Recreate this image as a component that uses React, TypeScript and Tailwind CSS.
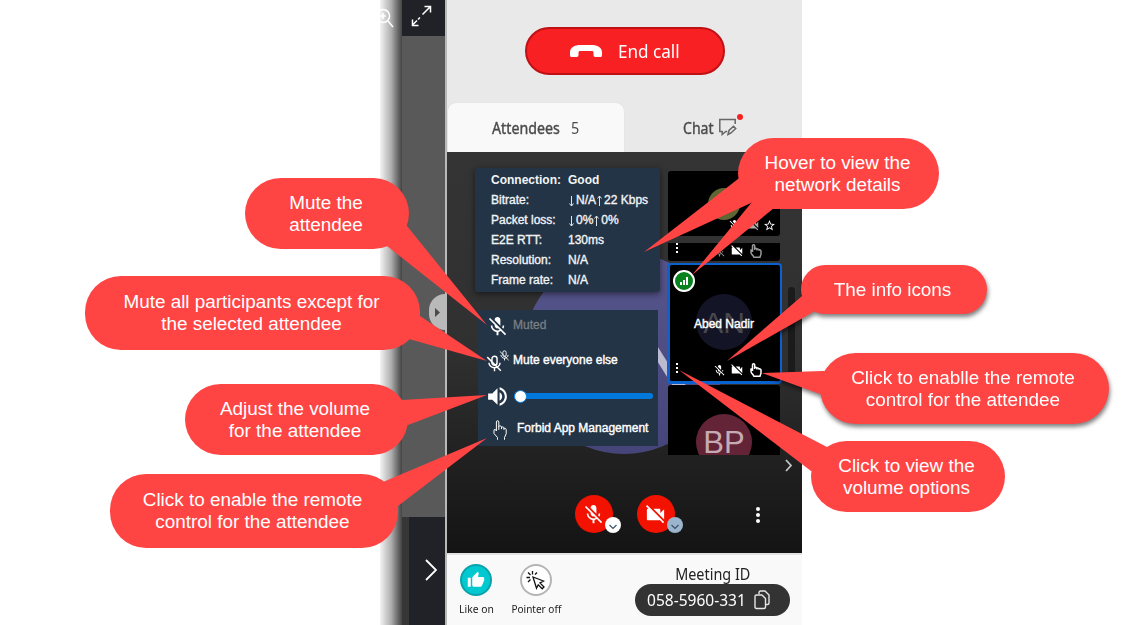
import React from "react";
import { MdMicOff, MdVideocamOff, MdVolumeUp, MdStarBorder, MdThumbUp } from "react-icons/md";

const ui = "font-['Liberation_Sans',Arial,sans-serif]";
const human = "font-['Noto_Sans',sans-serif]";

function Hand({ className }: { className: string }) {
  return (
    <svg viewBox="0 0 14 20" className={className} fill="none" stroke="currentColor" strokeWidth="1" strokeLinejoin="round" strokeLinecap="round">
      <path d="M4.500 19.300v-1.800L1 13.500V9.800c1-.8 2 0 2.400 1.200V2c0-1.700 2.400-1.700 2.400 0v7.500M5.800 6.200c1.200-.8 2.600-.3 2.700 1v1.500M8.500 7.200c1-.7 2.300-.2 2.500.8v1.500M11 8.400c1-.5 2.200 0 2.200 1.200v4.200L11.500 17.500v1.800" />
    </svg>
  );
}

function Cursor({ className }: { className: string }) {
  return (
    <svg viewBox="0 0 12 14" className={className} fill="none" stroke="currentColor" strokeWidth="1.500" strokeLinejoin="round">
      <path d="M2.500 8V1.800c0-1.400 2.200-1.400 2.200 0V6M4.700 4.600c1-.5 2.200-.2 2.200.8v1M6.900 5.200c1-.4 2.100-.1 2.100.9v.7M9 5.900c1.200-.3 2 .3 2 1.200V10c0 1-.9 1.600-.9 3.200H3.800C3.800 11.600 1 10.500 1 8.500V6c.6-.3 1.200 0 1.500.6" />
    </svg>
  );
}

function OutlineMicOff({ className }: { className: string }) {
  return (
    <svg viewBox="0 0 20 20" className={className} fill="none" stroke="currentColor" strokeWidth="1.700">
      <rect x="7" y="1.500" width="6" height="10.500" rx="3" />
      <path d="M3.500 9c0 3.500 3 6 6.500 6s6.500-2.500 6.500-6M10 15v4M1.500 2.500l16 16" />
    </svg>
  );
}

function Dots({ className }: { className: string }) {
  return (
    <svg viewBox="0 0 4 12" className={className} fill="#fff">
      <rect x="1" y="1" width="2" height="2" />
      <rect x="1" y="5" width="2" height="2" />
      <rect x="1" y="9" width="2" height="2" />
    </svg>
  );
}

function TileIcons({ active }: { active?: boolean }) {
  return (
    <div className="flex h-4 items-center text-white">
      <MdMicOff className={active ? "h-[13px] w-[13px]" : "h-[13px] w-[13px] text-[#8c8c8c]"} />
      <MdVideocamOff className="ml-[4px] h-[14px] w-[14px]" />
      <Cursor className={active ? "ml-[6px] h-[14px] w-3" : "ml-[6px] h-[14px] w-3 text-[#999]"} />
    </div>
  );
}

const stats = [
  ["Bitrate:", "N/A", "22 Kbps"],
  ["Packet loss:", "0%", "0%"],
  ["E2E RTT:", "130ms"],
  ["Resolution:", "N/A"],
  ["Frame rate:", "N/A"],
];

function Arrow({ up }: { up?: boolean }) {
  return (
    <svg viewBox="0 0 6 12" className={up ? "mr-[2px] h-3 w-[6px]" : "mr-[2px] mt-[2px] h-3 w-[6px]"} fill="none" stroke="#dfe4e8" strokeWidth="1">
      {up ? <path d="M3.500 12V2M1.500 4.500l2-2.500 2 2.500" /> : <path d="M3.500 1v10M1.500 8.500l2 2.500 2-2.500" />}
    </svg>
  );
}

function NetworkPanel() {
  return (
    <div className={`${ui} absolute left-[28px] top-[16px] h-[124px] w-[185px] rounded-[3px] bg-[#233446] pl-4 pt-[2px] text-[12px] leading-5 text-[#f2f4f6] shadow-[0_2px_6px_rgba(0,0,0,0.5)]`}>
      <div className="flex font-bold">
        <span className="w-[77px]">Connection:</span>
        <span>Good</span>
      </div>
      {stats.map(([label, a, b]) => (
        <div key={label} className="flex [-webkit-text-stroke:0.35px_#f2f4f6]">
          <span className="w-[77px]">{label}</span>
          <span className="flex items-center whitespace-nowrap">
            {b && <Arrow />}
            {a}
            {b && <Arrow up />}
            {b}
          </span>
        </div>
      ))}
    </div>
  );
}

function VolumeMenu() {
  return (
    <div className={`${ui} absolute left-[31px] top-[158px] flex h-[136px] w-[180px] flex-col bg-[#233446] pl-[10px] text-[12px] text-white`}>
      <div className="flex h-[29px] items-center">
        <MdMicOff className="-ml-[2px] mt-[3px] h-[23px] w-[23px]" />
        <span className="ml-[4px] text-[#7b7f82] [-webkit-text-stroke:0.3px_#7b7f82]">Muted</span>
      </div>
      <div className="flex h-[40px] items-center pt-[2px]">
        <span className="flex w-[25px] items-center">
          <OutlineMicOff className="-ml-[2px] mt-[7px] h-[17px] w-[17px] shrink-0" />
          <OutlineMicOff className="-ml-[4px] -mt-[10px] h-[11px] w-[11px] shrink-0" />
        </span>
        <span className="[-webkit-text-stroke:0.4px_white]">Mute everyone else</span>
      </div>
      <div className="flex h-[34px] items-center">
        <MdVolumeUp className="-ml-[3px] h-[25px] w-[25px]" />
        <span className="ml-[4px] flex h-[6px] w-[139px] items-center rounded-full bg-[#0479dc]">
          <span className="h-[13px] w-[13px] rounded-full border border-[#0479dc] bg-white" />
        </span>
      </div>
      <div className="flex h-[30px] items-center">
        <Hand className="ml-[5px] mt-[3px] h-5 w-[14px] shrink-0" />
        <span className="ml-[10px] whitespace-nowrap [-webkit-text-stroke:0.4px_white]">Forbid App Management</span>
      </div>
    </div>
  );
}

function Tiles() {
  return (
    <div className={`${ui} ml-[220px] flex h-[303px] w-[116px] flex-col overflow-hidden pt-[19px]`}>
      <div className="ml-px flex h-[65px] w-[112px] shrink-0 flex-col items-center rounded-[3px] bg-black pt-[17px]">
        <div className="h-8 w-8 shrink-0 rounded-full bg-[#5f6533]" />
        <div className="-mt-[2px] flex w-full items-center pl-[60px] text-white">
          <MdMicOff className="h-[13px] w-[13px]" />
          <MdVideocamOff className="ml-[5px] h-[14px] w-[14px] text-[#aaa]" />
          <MdStarBorder className="ml-[3px] h-[13px] w-[13px]" />
        </div>
      </div>
      <div className="ml-px mt-[7px] flex h-[18px] w-[112px] shrink-0 rounded-b-[3px] bg-black">
        <Dots className="ml-[7px] -mt-px h-3 w-1 shrink-0" />
        <div className="ml-[34px]"><TileIcons /></div>
      </div>
      <div className="mt-[2px] flex h-[121px] w-[115px] shrink-0 flex-col rounded-[4px] border-[3px] border-t-2 border-r-2 border-[#0a62d0] bg-black">
        <div className="ml-[3px] mt-[5px] flex h-[22px] w-[22px] shrink-0 items-center justify-center rounded-full border-2 border-white bg-[#07821e]">
          <svg viewBox="0 0 10 10" className="h-[10px] w-[10px]" fill="#fff"><path d="M1 6h2v3H1zM4 4h2v5H4zM7 1h2v8H7z" /></svg>
        </div>
        <div className="-ml-[2px] mt-[2px] grid h-14 shrink-0 place-items-center">
          <span className="col-start-1 row-start-1 flex h-14 w-14 items-center justify-center rounded-full bg-[#141427] text-[30px] text-[#48484e]">AN</span>
          <span className="z-10 col-start-1 row-start-1 mt-[4px] whitespace-nowrap text-[12px] text-white [-webkit-text-stroke:0.4px_white]">Abed Nadir</span>
        </div>
        <div className="mt-[12px] flex items-center">
          <Dots className="-mt-[5px] ml-[5px] h-3 w-1 shrink-0" />
          <div className="ml-[34px]"><TileIcons active /></div>
        </div>
      </div>
      <div className="ml-px mt-px flex h-[70px] w-[112px] shrink-0 justify-center overflow-hidden rounded-t-[3px] bg-black pt-[29px]">
        <div className="grid h-14 w-14 shrink-0 place-items-center rounded-full bg-[#632438] pt-[2px] text-[31px] text-[#c6abb3]">BP</div>
      </div>
    </div>
  );
}

function MediaButton({ video }: { video?: boolean }) {
  return (
    <div className="relative flex h-[38px] w-[38px] items-center justify-center rounded-full bg-[#f31100] text-white">
      {video ? <MdVideocamOff className="-ml-px h-[23px] w-[23px]" /> : <MdMicOff className="-ml-px h-[23px] w-[23px]" />}
      <span className={video ? "absolute left-[30px] top-[22px] flex h-4 w-4 items-center justify-center rounded-full bg-[#9bb5cd]" : "absolute left-[30px] top-[22px] flex h-4 w-4 items-center justify-center rounded-full bg-white"}>
        <svg viewBox="0 0 8 6" className="mt-[3px] h-[6px] w-2" fill="none" stroke="#3c5168" strokeWidth="1.200"><path d="m.5 1 3.500 3.500L7.500 1" /></svg>
      </span>
    </div>
  );
}

function Stage() {
  return (
    <div className="relative h-[401px] overflow-hidden bg-linear-to-b from-[#343434] via-[#303030] via-50% to-[#141414]">
      <div className={`${ui} absolute left-[76px] top-[100px] flex h-[202px] w-[202px] items-center justify-center rounded-full bg-linear-to-b from-[#57568d] to-[#46457a] text-[100px] text-[#bbbad1]`}>AN</div>
      <div className="relative flex">
        <Tiles />
        <div className="ml-[5px] mt-[135px] h-[95px] w-[7px] rounded-full bg-[#1b1b1b]" />
      </div>
      <div className="relative flex h-5 justify-end pr-[9px] pt-[3px]">
        <svg viewBox="0 0 8 14" className="h-[14px] w-2" fill="none" stroke="#c4c4c4" strokeWidth="1.800"><path d="m1 2 5 5.500L1 13" /></svg>
      </div>
      <div className="relative mt-5 flex items-center pl-32">
        <MediaButton />
        <div className="ml-6"><MediaButton video /></div>
        <svg viewBox="0 0 6 18" className="ml-[80px] mt-px h-[18px] w-[6px]" fill="#fff"><circle cx="3" cy="3" r="2" /><circle cx="3" cy="9" r="2" /><circle cx="3" cy="15" r="2" /></svg>
      </div>
      <NetworkPanel />
      <VolumeMenu />
    </div>
  );
}

function LeftStrip() {
  return (
    <div className="relative flex h-full w-[65px] shrink-0 flex-col bg-[#595959]">
      <div className="h-9 bg-[#202227]" />
      <div className="h-[481px]" />
      <div className="flex flex-1 bg-[#363636] pl-[29px]">
        <div className="flex-1 bg-[#202227] pl-4 pt-[42px]">
          <svg viewBox="0 0 12 22" className="h-[22px] w-3" fill="none" stroke="#fff" strokeWidth="1.800"><path d="m1 1 10 10L1 21" /></svg>
        </div>
      </div>
      <div className="absolute left-0 top-0 h-full w-[22px] bg-linear-to-r from-[#f4f4f4] via-[#b0b0b0] via-50% to-[#444]" />
      <svg viewBox="0 0 65 36" className="absolute left-0 top-0 h-9 w-[65px] overflow-hidden" fill="none" stroke="#fff" strokeWidth="1.500">
        <circle cx="3" cy="16" r="6.500" /><path d="m8 21 5 6M0 16h6M3 13v6" />
        <path d="m42.500 14.500 7.500-7.500M44.500 6.500h6v6M40 17.500l-2 2M37 20.500l-4.500 4.500M32.500 19.500v6h6" />
      </svg>
      <div className="absolute right-0 top-[294px] flex h-[36px] w-[16px] items-center rounded-l-full bg-[#b9b9b9] pl-[6px]">
        <svg viewBox="0 0 5 9" className="h-[9px] w-[5px]" fill="#4a4a4a"><path d="M0 0l5 4.500L0 9z" /></svg>
      </div>
    </div>
  );
}

function Footer() {
  return (
    <div className={`${human} flex flex-1 border-t-2 border-[#e2e2e2] bg-[#f9f9f9] text-[#222]`}>
      <div className="flex w-[58px] flex-col items-center pt-[9px]">
        <div className="flex h-8 w-8 items-center justify-center rounded-full border-2 border-[#0aa3ab] bg-[#02c8cf] text-white"><MdThumbUp className="h-[18px] w-[18px]" /></div>
        <span className="mt-[5px] scale-x-[0.94] whitespace-nowrap text-[11px] leading-4">Like on</span>
      </div>
      <div className="flex w-[62px] flex-col items-center pt-[9px]">
        <div className="flex h-8 w-8 items-center justify-center rounded-full border-2 border-[#b5b5b5] bg-white">
          <svg viewBox="0 0 20 20" className="h-5 w-5" fill="none" stroke="#111" strokeWidth="1.300"><path d="m7 7 10.500 4-3.500 2 4 4-1.800 1.800-4-4-1.700 3.400zM6.500 4.500V1M4.500 5 2 2.500M4 7.500H.5M4.500 9.500 2 12M9 4.500l2-2" /></svg>
        </div>
        <span className="mt-[5px] scale-x-[0.91] whitespace-nowrap text-[11px] leading-4">Pointer off</span>
      </div>
      <div className="ml-[68px] flex w-[155px] flex-col items-center pt-[8px]">
        <span className="scale-x-[0.9] pt-px text-[16px] leading-5">Meeting ID</span>
        <div className="flex h-8 w-[155px] items-center rounded-full bg-[#333] pl-3 text-white">
          <span className="w-[107px] origin-left scale-x-[0.97] whitespace-nowrap text-[16px]">058-5960-331</span>
          <svg viewBox="0 0 16 20" className="h-5 w-4" fill="none" stroke="#e5e5e5" strokeWidth="1.400" strokeLinejoin="round"><path d="M5 4V2.500C5 1.500 5.500 1 6.500 1H11l4 4v8c0 1-.5 1.500-1.500 1.500H12M2.500 5H8l3.500 3.500V17c0 1-.5 1.500-1.500 1.500H2.500C1.500 18.500 1 18 1 17V6.500C1 5.500 1.500 5 2.500 5z" /></svg>
        </div>
      </div>
    </div>
  );
}

function Header() {
  return (
    <div className={`${human} flex h-[152px] shrink-0 flex-col bg-[#e9e9e9]`}>
      <div className="flex h-[103px] justify-center pt-[27px]">
        <button className="ml-px flex h-12 w-[200px] items-center rounded-full border-2 border-[#bf1115] bg-[#f82023] pl-[43px] text-[18px] text-white">
          <svg viewBox="0 0 32 12" className="h-3 w-8" fill="#fff"><path d="M2 12C.3 12 0 11.500 0 9.500V7.500C0 2.500 4 0 11 0h10c7 0 11 2.500 11 7.500v2c0 2-.3 2.500-2 2.500h-4.500c-1.500 0-2-.8-2-2V8c0-1.500-.5-2-2-2h-11c-1.500 0-2 .5-2 2v2c0 1.200-.5 2-2 2z" /></svg>
          <span className="ml-4 origin-left scale-x-[0.95] whitespace-nowrap">End call</span>
        </button>
      </div>
      <div className="flex flex-1 text-[#4b4b4b]">
        <div className="ml-px flex h-full w-[176px] items-center rounded-t-[8px] bg-[#f9f9f9] pl-11 text-[16px] shadow-[0_0_1px_#ccc]">
          <span className="w-[79px] origin-left scale-x-[0.89] [-webkit-text-stroke:0.4px_#4b4b4b]">Attendees</span>
          <span className="origin-left scale-x-[0.9]">5</span>
        </div>
        <div className="flex items-center pl-[59px] text-[16px]">
          <span className="w-[36px] origin-left scale-x-[0.88] [-webkit-text-stroke:0.4px_#4b4b4b]">Chat</span>
          <svg viewBox="0 0 26 22" className="-ml-px -mt-[5px] h-[22px] w-[26px]" fill="none" stroke="#666" strokeWidth="1.500"><path d="M17.200 10V5.500H1.800v12h2.400v3l3.600-3h1.400M10 20.500l1-4 4.500-4.200 2.200 2.200-4.700 4.500z" /><circle cx="22" cy="3" r="3" fill="#f82023" stroke="none" /></svg>
        </div>
      </div>
    </div>
  );
}

type CalloutProps = { box: string; tail: string[]; lines: string[]; shadow?: boolean };

function Callout({ box, tail, lines, shadow }: CalloutProps) {
  return (
    <div className={shadow ? "absolute inset-0 drop-shadow-[1px_3px_2px_rgba(0,0,0,0.5)]" : "absolute inset-0"}>
      <svg viewBox="0 0 1125 625" className="absolute inset-0 h-full w-full" fill="#ff4444">
        {tail.map((p) => <polygon key={p} points={p} />)}
      </svg>
      <div className={`${ui} absolute flex flex-col items-center justify-center rounded-[36px] bg-[#ff4444] text-[18.900px] leading-[22px] text-white ${box}`}>
        {lines.map((l) => <span key={l} className="whitespace-nowrap">{l}</span>)}
      </div>
    </div>
  );
}

const callouts: CalloutProps[] = [
  { box: "left-[245px] top-[178px] w-[164px] h-[71px] pr-[2px]", tail: ["395,215 407,226 487,325 387,246 380,230"], lines: ["Mute the", "attendee"] },
  { box: "left-[85px] top-[276px] w-[335px] h-[74px] pr-[2px]", tail: ["400,310 420,316 487,361 409,339 390,330"], lines: ["Mute all participants except for", "the selected attendee"] },
  { box: "left-[185px] top-[384px] w-[223px] h-[71px] pr-[3px]", tail: ["390,401 402,400 487,395 408,425 390,425"], lines: ["Adjust the volume", "for the attendee"] },
  { box: "left-[110px] top-[474px] w-[288px] h-[74px] pr-[3px]", tail: ["375,485 383,482 487,438 398,506 380,515"], lines: ["Click to enable the remote", "control for the attendee"] },
  { box: "left-[738px] top-[138px] w-[201px] h-[71px] pr-[2px]", tail: ["760,165 738,179 644,252 751,203 770,190", "765,180 752,202 692,275 774,208 790,190"], lines: ["Hover to view the", "network details"] },
  { box: "left-[801px] top-[265px] w-[186px] h-[49px] pr-[3px]", tail: ["820,285 802,296 727,361 815,311 830,300"], lines: ["The info icons"], shadow: true },
  { box: "left-[820px] top-[353px] w-[289px] h-[71px] pr-[3px]", tail: ["840,371 823,371 762,373 820,394 840,394"], lines: ["Click to enablle the remote", "control for the attendee"], shadow: true },
  { box: "left-[811px] top-[441px] w-[194px] h-[71px] pr-[3px]", tail: ["840,455 827,447 679,370 811,471 830,475"], lines: ["Click to view the", "volume options"] },
];

export default function App() {
  return (
    <div className="relative h-[625px] w-[1125px] overflow-hidden bg-white">
      <div className="ml-[380px] flex h-full w-[422px]">
        <LeftStrip />
        <div className="w-[2px] shrink-0 bg-[#b9b9b9]" />
        <div className="flex w-[355px] flex-col">
          <Header />
          <Stage />
          <Footer />
        </div>
      </div>
      {callouts.map((c) => <Callout key={c.box} {...c} />)}
    </div>
  );
}
